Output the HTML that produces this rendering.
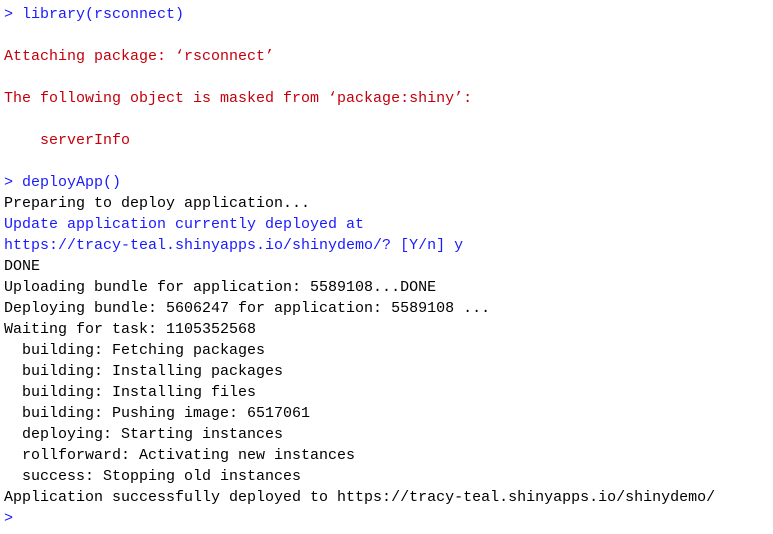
<!DOCTYPE html>
<html><head><meta charset="utf-8"><style>
html,body{margin:0;padding:0;background:#fff;width:773px;height:534px;overflow:hidden}
pre{margin:0;padding:4px 0 0 4px;font-family:"Liberation Mono",monospace;font-size:15px;line-height:21px;color:#000}
.b{color:#1a1aff}.r{color:#c4000c}
</style></head><body><pre><span class="b">&gt; library(rsconnect)</span>

<span class="r">Attaching package: ‘rsconnect’</span>

<span class="r">The following object is masked from ‘package:shiny’:</span>

<span class="r">    serverInfo</span>

<span class="b">&gt; deployApp()</span>
Preparing to deploy application...
<span class="b">Update application currently deployed at
https://tracy-teal.shinyapps.io/shinydemo/? [Y/n] y</span>
DONE
Uploading bundle for application: 5589108...DONE
Deploying bundle: 5606247 for application: 5589108 ...
Waiting for task: 1105352568
  building: Fetching packages
  building: Installing packages
  building: Installing files
  building: Pushing image: 6517061
  deploying: Starting instances
  rollforward: Activating new instances
  success: Stopping old instances
Application successfully deployed to https://tracy-teal.shinyapps.io/shinydemo/
<span class="b">&gt;</span></pre></body></html>
